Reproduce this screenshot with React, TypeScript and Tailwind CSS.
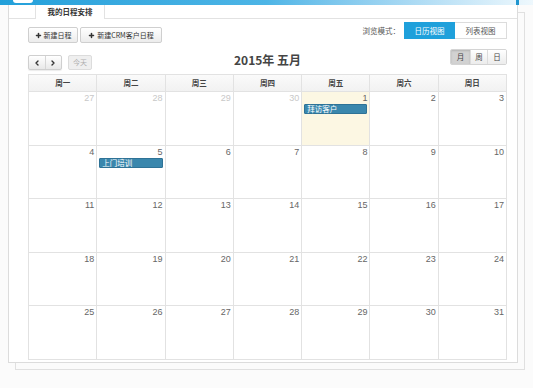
import { Plus, ChevronLeft, ChevronRight } from "lucide-react";

const weekdays = ["周一", "周二", "周三", "周四", "周五", "周六", "周日"];

const weeks = [
  [27, 28, 29, 30, 1, 2, 3],
  [4, 5, 6, 7, 8, 9, 10],
  [11, 12, 13, 14, 15, 16, 17],
  [18, 19, 20, 21, 22, 23, 24],
  [25, 26, 27, 28, 29, 30, 31],
];

const events: Record<number, string> = {
  1: "拜访客户",
  5: "上门培训",
};

const cjk = "font-['Noto_Sans_CJK_SC','Liberation_Sans',sans-serif]";

const App = () => {
  return (
    <div className={`w-[533px] h-[388px] overflow-hidden bg-[#fbfbfb] ${cjk}`}>
      {/* top bar */}
      <div className="flex h-[5px] bg-gradient-to-r from-[#22a0da] via-[#4db5e6] to-[#eef8fd]">
        <div className="ml-[13px] h-[3px] w-[20px] rounded-b-[3px] bg-white" />
        <div className="ml-auto mr-[14px] w-[3px] bg-[#1f95cf]" />
      </div>

      {/* window */}
      <div className="ml-[8px] w-[510px] border-x border-b border-[#dcdcdc] bg-white pb-[2px] shadow-[7px_7px_0_-1px_#fbfbfb,7px_7px_0_0_#e0e0e0]">
        {/* tabs */}
        <div className="flex h-[14px] border-b border-[#e2e2e2]">
          <div className="ml-[26px] -mb-px flex w-[70px] items-center justify-center border-x border-[#e2e2e2] bg-white text-[7.5px] font-bold text-[#333]">
            我的日程安排
          </div>
        </div>

        <div className="pl-[19px] pr-[10px]">
          {/* toolbar row 1 */}
          <div className="mt-[3px] flex items-start justify-between">
            <div className="mt-[5px] flex gap-[2px]">
              <button className="flex h-[16px] w-[50px] items-center justify-center gap-[2px] rounded-[2px] border border-[#cfcfcf] bg-gradient-to-b from-white to-[#ececec] text-[7px] text-[#333]">
                <Plus className="h-[7px] w-[7px]" strokeWidth={5} />
                新建日程
              </button>
              <button className="flex h-[16px] w-[82px] items-center justify-center gap-[2px] rounded-[2px] border border-[#cfcfcf] bg-gradient-to-b from-white to-[#ececec] text-[7px] text-[#333]">
                <Plus className="h-[7px] w-[7px]" strokeWidth={5} />
                新建CRM客户日程
              </button>
            </div>
            <div className="flex items-center">
              <span className="mr-[4px] text-[7.5px] text-[#555]">浏览模式：</span>
              <div className="flex h-[17px] w-[51px] items-center justify-center bg-[#1fa0db] text-[7.5px] text-white">
                日历视图
              </div>
              <div className="flex h-[17px] w-[52px] items-center justify-center border border-l-0 border-[#dcdcdc] bg-white text-[7.5px] text-[#555]">
                列表视图
              </div>
            </div>
          </div>

          {/* toolbar row 2 */}
          <div className="mt-[6px] grid grid-cols-[1fr_auto_1fr] items-start">
            <div className="mt-[6px] flex gap-[6px]">
              <div className="flex h-[15px] w-[34px] rounded-[2px] border border-[#cfcfcf] bg-gradient-to-b from-white to-[#e8e8e8] shadow-[0_1px_1px_rgba(0,0,0,0.08)]">
                <div className="flex flex-1 items-center justify-center border-r border-[#d6d6d6]">
                  <ChevronLeft className="h-[8px] w-[8px] text-[#333]" strokeWidth={4} />
                </div>
                <div className="flex flex-1 items-center justify-center">
                  <ChevronRight className="h-[8px] w-[8px] text-[#333]" strokeWidth={4} />
                </div>
              </div>
              <div className="flex h-[15px] w-[24px] items-center justify-center rounded-[2px] border border-[#dcdcdc] bg-[#efefef] text-[7px] text-[#b0b0b0]">
                今天
              </div>
            </div>
            <div className="mt-[2px] text-[12px] font-bold text-[#444]">2015年 五月</div>
            <div className="flex justify-end">
              <div className="flex h-[16px] overflow-hidden rounded-[2px] border border-[#d4d4d4] text-[7.5px] text-[#444]">
                <div className="flex w-[19px] items-center justify-center bg-[#d2d2d2] shadow-[inset_0_1px_2px_rgba(0,0,0,0.15)]">月</div>
                <div className="flex w-[18px] items-center justify-center border-x border-[#dcdcdc] bg-gradient-to-b from-white to-[#ececec]">周</div>
                <div className="flex w-[18px] items-center justify-center bg-gradient-to-b from-white to-[#ececec]">日</div>
              </div>
            </div>
          </div>

          {/* calendar */}
          <div className="mt-[4px] w-[479px] border-l border-t border-[#e2e2e2]">
            <div className="grid grid-cols-7 bg-gradient-to-b from-[#fafafa] to-[#f1f1f1]">
              {weekdays.map((d) => (
                <div
                  key={d}
                  className="flex h-[17px] items-center justify-center border-r border-b border-[#e2e2e2] text-[7.5px] font-bold text-[#444]"
                >
                  {d}
                </div>
              ))}
            </div>
            {weeks.map((week, wi) => (
              <div key={wi} className="grid grid-cols-7">
                {week.map((day, di) => {
                  const muted = wi === 0 && day > 20;
                  const today = wi === 0 && day === 1;
                  const ev = !muted ? events[day] : undefined;
                  return (
                    <div
                      key={di}
                      className={`h-[53.5px] border-r border-b border-[#e2e2e2] px-[2px] pt-[1px] ${
                        today ? "bg-[#fcf7e3]" : "bg-white"
                      }`}
                    >
                      <div
                        className={`text-right font-['Liberation_Sans',sans-serif] text-[9px] leading-[10px] ${
                          muted ? "text-[#c8c8c8]" : "text-[#666]"
                        }`}
                      >
                        {day}
                      </div>
                      {ev && (
                        <div className="mt-[1px] h-[10px] rounded-[1px] border border-[#2e7296] bg-[#3a87ad] pl-[2px] text-[7.5px] leading-[8px] text-white">
                          {ev}
                        </div>
                      )}
                    </div>
                  );
                })}
              </div>
            ))}
          </div>
        </div>
      </div>
    </div>
  );
};

export default App;
